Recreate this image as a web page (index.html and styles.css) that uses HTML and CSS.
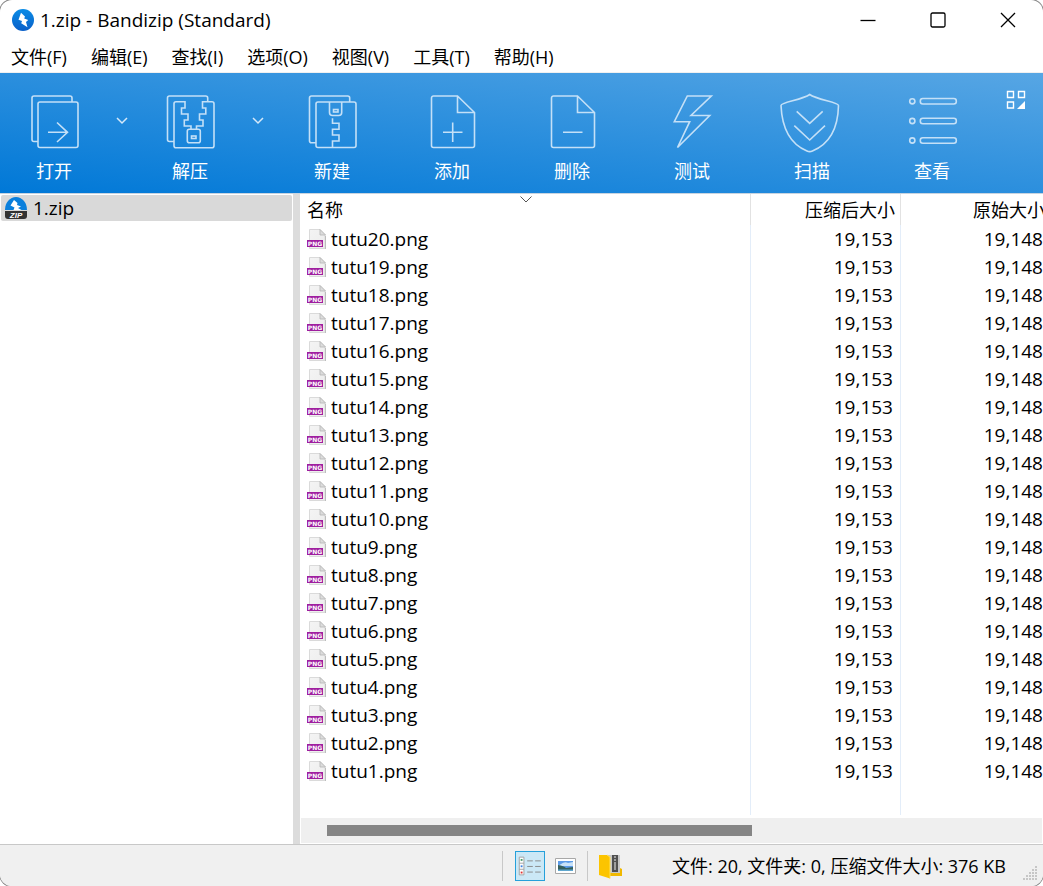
FILE: index.html
```html
<!DOCTYPE html>
<html lang="zh-CN">
<head>
<meta charset="utf-8">
<title>1.zip - Bandizip (Standard)</title>
<link rel="stylesheet" href="styles.css">
</head>
<body>
<svg class="defs" aria-hidden="true">
  <defs>
    <linearGradient id="ball" x1="0" y1="0" x2="0" y2="1"><stop offset="0" stop-color="#0a8ce6"/><stop offset="1" stop-color="#0a5fc8"/></linearGradient>
    <linearGradient id="paper" x1="0" y1="0" x2="1" y2="1"><stop offset="0" stop-color="#f4f4f4"/><stop offset="1" stop-color="#ececec"/></linearGradient>
    <symbol id="png" viewBox="0 0 20 20">
      <path d="M2.500.5h10.500l5 5v14H2.500z" fill="url(#paper)" stroke="#dadada"/>
      <path d="M13 .5v5.500h5.500z" fill="#dcdcdc" stroke="#b4b4b4" stroke-width=".8"/>
      <path d="M18.500 7v13" stroke="#bdbdbd"/>
      <path d="M0 11h16v7H0z" fill="#9f1f9f"/>
      <text x="8" y="16.500" text-anchor="middle" class="png-tag">PNG</text>
    </symbol>
  </defs>
</svg>
<div class="window">
  <header class="titlebar">
    <svg class="app-icon" viewBox="0 0 22 22" aria-hidden="true"><circle cx="11" cy="11" r="11" fill="url(#ball)"/><path d="M9 3.700L6.500 10.700 10 12l-.8 2.200 6.300 4L14 13l2.200-2-4-1.400.8-2z" fill="#fff"/></svg>
    <h1 class="title">1.zip - Bandizip (Standard)</h1>
    <button class="win-btn" aria-label="最小化"><svg viewBox="0 0 16 16"><path d="M.5 8.500h15"/></svg></button>
    <button class="win-btn" aria-label="最大化"><svg viewBox="0 0 16 16"><rect x="1" y="1" width="14" height="14" rx="1.500"/></svg></button>
    <button class="win-btn" aria-label="关闭"><svg viewBox="0 0 16 16"><path d="M1 1l14 14M15 1L1 15"/></svg></button>
  </header>
  <nav class="menubar">
    <button>文件(F)</button><button>编辑(E)</button><button>查找(I)</button><button>选项(O)</button><button>视图(V)</button><button>工具(T)</button><button>帮助(H)</button>
  </nav>
  <div class="toolbar">
    <button class="tool tool-split"><svg viewBox="0 0 60 60"><path d="M14 49.500h-4a2 2 0 0 1-2-2V6a2 2 0 0 1 2-2h36a2 2 0 0 1 2 2v4"/><rect x="14" y="10" width="40" height="45.500" rx="2"/><path d="M24 40.300h19M33 30.500l10.500 9.800L33 50"/></svg><span>打开</span></button>
    <button class="drop" aria-label="打开选项"><svg viewBox="0 0 12 8"><path d="M1 1l5 5 5-5"/></svg></button>
    <button class="tool tool-split"><svg viewBox="0 0 60 60"><path d="M14 49.500h-4.500a2 2 0 0 1-2-2V6a2 2 0 0 1 2-2h36.200a2 2 0 0 1 2 2v4"/><path d="M31 37.300V34h-6.700v-6H28v-6h-6.500v-6H25V9.800h-9a2 2 0 0 0-2 2v41.900a2 2 0 0 0 2 2h36a2 2 0 0 0 2-2V11.800a2 2 0 0 0-2-2h-9.500V16h3.300v6h-6.300v6H43v6h-6.500v3.300"/><rect x="27.300" y="37.300" width="13" height="13.500" rx="2"/><rect x="31.500" y="44" width="4.500" height="2.500"/></svg><span>解压</span></button>
    <button class="drop" aria-label="解压选项"><svg viewBox="0 0 12 8"><path d="M1 1l5 5 5-5"/></svg></button>
    <button class="tool"><svg viewBox="0 0 60 60"><path d="M14 50.700H9.500a2 2 0 0 1-2-2V6a2 2 0 0 1 2-2h36.200a2 2 0 0 1 2 2v4"/><rect x="14" y="10" width="40" height="45.500" rx="2"/><path d="M27.500 10v10.500a3 3 0 0 0 3 3h6.200a3 3 0 0 0 3-3V10M30.500 26.300v5H37v6h-6.500V43H37v6h-6.500v6.500"/><rect x="31.500" y="17.500" width="4.500" height="2.500"/></svg><span>新建</span></button>
    <button class="tool"><svg viewBox="0 0 60 60"><path d="M35.500 4H11.500a2 2 0 0 0-2 2v47.500a2 2 0 0 0 2 2h39a2 2 0 0 0 2-2v-33zv16.500h17M30.700 30.500v19.500M21 40.300h19.500"/></svg><span>添加</span></button>
    <button class="tool"><svg viewBox="0 0 60 60"><path d="M35.500 4H11.500a2 2 0 0 0-2 2v47.500a2 2 0 0 0 2 2h39a2 2 0 0 0 2-2v-33zv16.500h17M21 40.300h19.500"/></svg><span>删除</span></button>
    <button class="tool"><svg viewBox="0 0 60 60"><path d="M25.300 4h24L29 23.500h18.700L15.500 55.500l12.200-25.800H12.300z"/></svg><span>测试</span></button>
    <button class="tool"><svg viewBox="0 0 60 60"><path d="M27.700 2.500C20 8-1 10-1 13.500 0 36 8 52 25 59q2.700 1.200 5.400 0C47.500 52 56 36 56.500 13.500 56.500 10 35.500 8 27.700 2.500z"/><path d="M14.700 19.300l13 12 13-12M12.300 33.700L27.700 48 43 33.700"/></svg><span>扫描</span></button>
    <button class="tool"><svg viewBox="0 0 60 60"><circle cx="10.300" cy="9.300" r="2.600"/><circle cx="10.300" cy="29" r="2.600"/><circle cx="10.300" cy="48.500" r="2.600"/><rect x="18.300" y="6.500" width="36" height="5.500" rx="2.500"/><rect x="18.300" y="26.200" width="36" height="5.500" rx="2.500"/><rect x="18.300" y="45.700" width="36" height="5.500" rx="2.500"/></svg><span>查看</span></button>
    <button class="layout-btn" aria-label="自定义工具栏"><svg viewBox="0 0 20 20"><path d="M1.500 1.500h6v6h-6zM12.500 1.500h6v6h-6zM1.500 12h6v6h-6z" fill="none" stroke="#fff" stroke-width="1.400"/><path d="M19 11v8h-8z" fill="#fff"/></svg></button>
  </div>
  <main class="panes">
    <aside class="tree">
      <button class="tree-item"><svg viewBox="0 0 22 22" aria-hidden="true"><path d="M0 13a11 13 0 0 1 22 0z" fill="#0a7fdc"/><path d="M9 3L5.500 8.500l4 2-1 2.500h8L13 11l3-1.500L12 8l.5-2z" fill="#fff"/><path d="M0 14h22v5q0 3-3 3H3q-3 0-3-3z" fill="#333"/><text x="11" y="21" text-anchor="middle" class="zip-tag">ZIP</text></svg><span>1.zip</span></button>
    </aside>
    <section class="list">
      <div class="list-view">
        <svg class="sort" viewBox="0 0 12 7" aria-hidden="true"><path d="M.5.5L6 6l5.500-5.500"/></svg>
        <table class="files">
          <thead><tr><th class="col-name">名称</th><th class="col-size">压缩后大小</th><th class="col-size">原始大小</th></tr></thead>
          <tbody>
            <tr><td><svg><use href="#png"/></svg>tutu20.png</td><td>19,153</td><td>19,148</td></tr>
            <tr><td><svg><use href="#png"/></svg>tutu19.png</td><td>19,153</td><td>19,148</td></tr>
            <tr><td><svg><use href="#png"/></svg>tutu18.png</td><td>19,153</td><td>19,148</td></tr>
            <tr><td><svg><use href="#png"/></svg>tutu17.png</td><td>19,153</td><td>19,148</td></tr>
            <tr><td><svg><use href="#png"/></svg>tutu16.png</td><td>19,153</td><td>19,148</td></tr>
            <tr><td><svg><use href="#png"/></svg>tutu15.png</td><td>19,153</td><td>19,148</td></tr>
            <tr><td><svg><use href="#png"/></svg>tutu14.png</td><td>19,153</td><td>19,148</td></tr>
            <tr><td><svg><use href="#png"/></svg>tutu13.png</td><td>19,153</td><td>19,148</td></tr>
            <tr><td><svg><use href="#png"/></svg>tutu12.png</td><td>19,153</td><td>19,148</td></tr>
            <tr><td><svg><use href="#png"/></svg>tutu11.png</td><td>19,153</td><td>19,148</td></tr>
            <tr><td><svg><use href="#png"/></svg>tutu10.png</td><td>19,153</td><td>19,148</td></tr>
            <tr><td><svg><use href="#png"/></svg>tutu9.png</td><td>19,153</td><td>19,148</td></tr>
            <tr><td><svg><use href="#png"/></svg>tutu8.png</td><td>19,153</td><td>19,148</td></tr>
            <tr><td><svg><use href="#png"/></svg>tutu7.png</td><td>19,153</td><td>19,148</td></tr>
            <tr><td><svg><use href="#png"/></svg>tutu6.png</td><td>19,153</td><td>19,148</td></tr>
            <tr><td><svg><use href="#png"/></svg>tutu5.png</td><td>19,153</td><td>19,148</td></tr>
            <tr><td><svg><use href="#png"/></svg>tutu4.png</td><td>19,153</td><td>19,148</td></tr>
            <tr><td><svg><use href="#png"/></svg>tutu3.png</td><td>19,153</td><td>19,148</td></tr>
            <tr><td><svg><use href="#png"/></svg>tutu2.png</td><td>19,153</td><td>19,148</td></tr>
            <tr><td><svg><use href="#png"/></svg>tutu1.png</td><td>19,153</td><td>19,148</td></tr>
            <tr class="filler"><td></td><td></td><td></td></tr>
          </tbody>
        </table>
      </div>
      <div class="scrollbar"><div class="thumb"></div></div>
    </section>
  </main>
  <footer class="status">
    <div class="status-tools">
      <button class="view-btn active" aria-label="详细列表"><svg viewBox="0 0 30 30"><path d="M3.500 5.500h5v19h-5zM3.500 12h5M3.500 18.500h5" fill="#fff" stroke="#a0a0a0"/><path d="M5 8.500h2" stroke="#4a9a6a" stroke-width="2"/><path d="M5 15.300h2" stroke="#3c82e0" stroke-width="2"/><path d="M5 22h2" stroke="#e03030" stroke-width="2"/><path d="M12 9.500h6M20.500 9.500h6M12 15.500h6M20.500 15.500h6M12 21.500h6M20.500 21.500h6" stroke="#888"/></svg></button>
      <button class="view-btn" aria-label="图片预览"><svg viewBox="0 0 30 30"><path d="M4.500 7.500h20v15h-20z" fill="#fff" stroke="#a8a8a8"/><path d="M7 10h15v10H7z" fill="#5c9be8"/><path d="M10 13q4-3 7-1l5-1v4H7z" fill="#c8e2f8"/><path d="M7 14q6 1 8 3l7-1v4H7z" fill="#355f5c"/><path d="M7 18.500h15V20H7z" fill="#5fa7ce"/></svg></button>
    </div>
    <svg class="book" viewBox="0 0 26 30" aria-hidden="true"><path d="M8 4h14v13l2 1v7H9z" fill="#f0b800"/><path d="M8 4h14v18H9z" fill="#c8c8c8"/><path d="M14 4h6v17h-6z" fill="#505050"/><path d="M17 5v2m-1 2h2m-2 3h2m-2 2h2m-2 2h2m-2 2h2" stroke="#eee"/><path d="M1 4h8l3 2v21.500L1 24z" fill="#fcc400"/><path d="M9 4l3 2v21.500" fill="none" stroke="#ffe05a"/></svg>
    <p class="status-text">文件: 20, 文件夹: 0, 压缩文件大小: 376 KB</p>
    <svg class="grip" viewBox="0 0 16 16" aria-hidden="true"><path d="M13 1h2M10 4h2m1 0h2M7 7h2m1 0h2m1 0h2M4 10h2m1 0h2m1 0h2m1 0h2M1 13h2m1 0h2m1 0h2m1 0h2m1 0h2"/></svg>
  </footer>
</div>
</body>
</html>
```
FILE: styles.css
```css
* { box-sizing: border-box; }
html, body { height: 100%; margin: 0; }
body {
  font: 18px/24px "Open Sans", "Noto Sans CJK SC", sans-serif;
  color: #000;
  background: #fff;
}
button {
  margin: 0;
  padding: 0;
  border: 0;
  background: none;
  font: inherit;
  color: inherit;
}
svg { display: block; flex: none; }
.defs { position: absolute; width: 0; height: 0; }
.window {
  display: flex;
  flex-direction: column;
  height: 100vh;
  min-height: 480px;
  overflow: hidden;
  border-radius: 12px;
  background: #fff;
  box-shadow: 0 0 0 1px #888;
}

.titlebar { display: flex; align-items: center; height: 40px; padding-left: 12px; }
.app-icon { width: 22px; height: 22px; }
.title { flex: 1; margin: 0 0 0 6px; font-size: 19px; font-weight: 400; white-space: nowrap; }
.win-btn { display: grid; place-items: center; width: 70px; height: 40px; }
.win-btn svg { width: 16px; height: 16px; fill: none; stroke: #000; stroke-width: 1.3; }

.menubar {
  display: flex;
  gap: 24px;
  height: 33px;
  padding: 5px 11px;
  border-bottom: 1px solid #f0f0f0;
  white-space: nowrap;
}

.toolbar {
  display: flex;
  flex: none;
  height: 121px;
  border-bottom: 1px solid #c8d4e0;
  background: linear-gradient(to top right, #0078d7, #57a6e4);
  color: #fff;
}
.tool {
  display: flex;
  flex-direction: column;
  align-items: center;
  gap: 7px;
  width: 120px;
  padding-top: 19px;
}
.tool-split { width: 108px; }
.tool svg {
  width: 60px;
  height: 60px;
  overflow: visible;
  fill: none;
  stroke: #c4e0f7;
  stroke-width: 1.6;
}
.drop { display: grid; justify-items: center; align-content: start; width: 28px; padding-top: 44px; }
.drop svg { width: 12px; height: 8px; fill: none; stroke: #d5e9fa; stroke-width: 1.5; }
.layout-btn { align-self: flex-start; margin: 17px 17px 0 auto; }
.layout-btn svg { width: 20px; height: 20px; }

.panes { display: flex; flex: 1; min-height: 0; }
.tree { flex: none; width: 300px; padding: 1px 1px 0; border-right: 7px solid #dcdcdc; }
.tree-item {
  display: flex;
  align-items: center;
  gap: 6px;
  width: 100%;
  height: 26px;
  padding-left: 4px;
  border-radius: 2px;
  background: #d9d9d9;
  font-size: 19px;
}
.tree-item svg { width: 22px; height: 22px; }
.zip-tag { font: italic bold 8px "Liberation Sans", sans-serif; fill: #fff; }
.png-tag { font: bold 6px "DejaVu Sans", sans-serif; fill: #fff; }

.list { display: flex; flex: 1; flex-direction: column; min-width: 0; }
.list-view { position: relative; flex: 1; min-height: 0; overflow: hidden; }
.sort { position: absolute; top: 2px; left: 220px; width: 12px; height: 7px; fill: none; stroke: #555; }
.files { width: 750px; table-layout: fixed; border-spacing: 0; }
.files th { height: 31px; padding: 0 5px 0 7px; font-weight: 400; text-align: left; }
.files .col-size { width: 150px; text-align: right; }
.files td { height: 28px; padding: 0 7px; font-size: 19px; text-align: right; }
.files td:first-child { display: flex; align-items: center; gap: 4px; }
.files td + td { border-left: 1px solid #e3edf9; }
.files th + th { border-left: 1px solid #e2e2e2; }
.files .filler td { height: 30px; }
.files td svg { width: 20px; height: 20px; }
.scrollbar { flex: none; height: 25px; margin: 3px 1px 1px; padding: 7px 0 7px 26px; background: #efefef; }
.thumb { width: 60%; max-width: 425px; height: 11px; background: #858585; }

.status {
  display: flex;
  flex: none;
  align-items: center;
  justify-content: flex-end;
  height: 42px;
  border-top: 1px solid #c8c8c8;
  background: #f0f0f0;
}
.status-tools {
  display: flex;
  gap: 6px;
  padding: 0 6px 0 12px;
  border: solid #c8c8c8;
  border-width: 0 1px;
}
.view-btn { width: 30px; height: 30px; }
.view-btn.active { border: 1px solid #26a0da; background: #cbe8f6; }
.view-btn svg { width: 100%; height: 100%; }
.book { width: 26px; height: 30px; margin: 0 48px 0 10px; }
.status-text { margin: 0; white-space: nowrap; }
.grip { align-self: flex-end; width: 16px; height: 16px; margin: 0 5px 4px 16px; fill: none; stroke: #b8b8b8; stroke-width: 1.5; stroke-dasharray: 2 1; }
```
